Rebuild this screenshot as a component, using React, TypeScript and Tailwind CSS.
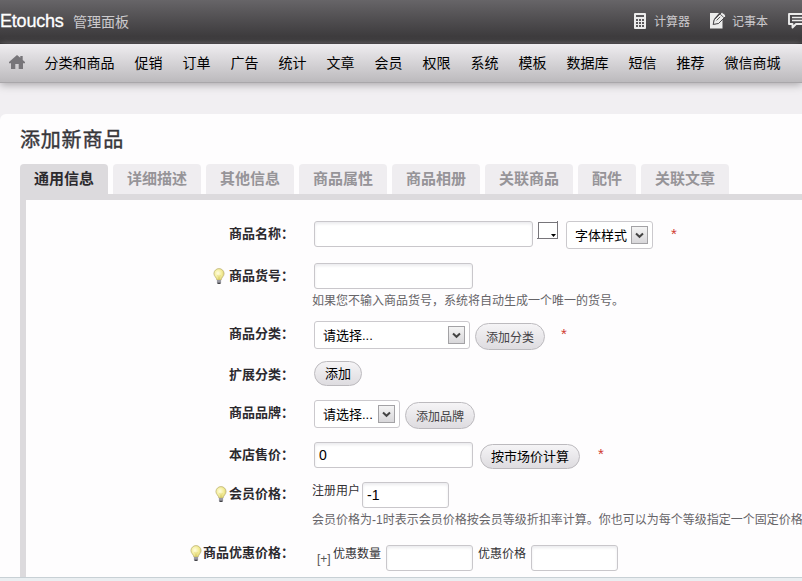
import type { ReactNode } from "react"
import clsx from "clsx"

const menuItems = [
  "分类和商品",
  "促销",
  "订单",
  "广告",
  "统计",
  "文章",
  "会员",
  "权限",
  "系统",
  "模板",
  "数据库",
  "短信",
  "推荐",
  "微信商城",
]

const tabs = ["通用信息", "详细描述", "其他信息", "商品属性", "商品相册", "关联商品", "配件", "关联文章"]

function CalculatorIcon() {
  return (
    <svg width="12" height="16" viewBox="0 0 12 16" className="-mt-0.5 shrink-0">
      <rect width="12" height="16" rx="1" fill="#ececec" />
      <rect x="2" y="2" width="8" height="2" fill="#5a585b" />
      {[6, 9, 12].map((y) =>
        [2, 5, 8].map((x) => <rect key={`${x}-${y}`} x={x} y={y} width="2" height="2" fill="#5a585b" />),
      )}
    </svg>
  )
}

function NoteIcon() {
  return (
    <svg width="17" height="17" viewBox="0 0 17 17" className="-mt-0.5 shrink-0">
      <path d="M0 1h9L4 7l-1.200 5.800L8.600 11.500 12.500 7v9.500H0z" fill="#ececec" />
      <path d="M3.200 12.400l1-4.600 7-7c1.200-1 5 2 4.300 3.700l-7 7z" fill="#ececec" stroke="#4a484b" strokeWidth="1" />
      <path d="M10.200 2.200l3.700 3.400M6.600 8.400l3.600-3.600" stroke="#4a484b" strokeWidth=".9" />
    </svg>
  )
}

function CommentIcon() {
  return (
    <svg width="18" height="16" viewBox="0 0 18 16" className="shrink-0">
      <path d="M1 1h16v10H8l-3.500 3.500V11H1z" fill="#4a484b" stroke="#ececec" strokeWidth="1.900" strokeLinejoin="round" />
      <path d="M4 4.500h10M4 7.500h10" stroke="#ececec" strokeWidth="1.300" />
    </svg>
  )
}

function HomeIcon() {
  return (
    <svg width="16" height="14" viewBox="0 0 16 14" className="-mt-0.5 shrink-0">
      <path d="M8 0 0 7v1.200h2V14h4.300V9h3.400v5H14V8.200h2V7l-2.300-2V1h-2.400v1.800z" fill="#777579" />
    </svg>
  )
}

function BulbIcon() {
  return (
    <svg width="12" height="17" viewBox="0 0 12 17" className="shrink-0">
      <defs>
        <radialGradient id="bulb" cx=".4" cy=".4" r=".65">
          <stop offset="0" stopColor="#fffde0" />
          <stop offset=".6" stopColor="#f3ec96" />
          <stop offset="1" stopColor="#dcd070" />
        </radialGradient>
      </defs>
      <path
        d="M6 .6A5.100 5.100 0 0 0 .9 5.600C.9 8.300 3.500 9.300 3.900 12h4.200c.4-2.700 3-3.700 3-6.400A5.100 5.100 0 0 0 6 .6z"
        fill="url(#bulb)"
        stroke="#b8ae72"
        strokeWidth=".7"
      />
      <path d="M4.800 7l1.200 5 1.200-5" stroke="#d3c55e" strokeWidth=".5" fill="none" />
      <path d="M3.900 12h4.200v2.500L7 16H5l-1.100-1.500z" fill="#9a9aa2" />
      <path d="M4.500 15.300h3" stroke="#3b3b40" strokeWidth="1.200" />
    </svg>
  )
}

function TextField({ className, value = "" }: { className: string; value?: string }) {
  return (
    <input
      type="text"
      defaultValue={value}
      className={clsx(
        "h-[26px] shrink-0 rounded-[3px] border border-[#c9c7cb] bg-white px-1 text-[14px] text-black shadow-[inset_0_2px_3px_#ececef]",
        className,
      )}
    />
  )
}

function SelectBox({ className, label }: { className: string; label: string }) {
  return (
    <button
      type="button"
      className={clsx(
        "flex h-7 shrink-0 items-center justify-between rounded-[3px] border border-[#cbc9cd] bg-white pr-1 pl-2 text-[13px] text-black",
        className,
      )}
    >
      <span className="mt-0.5 whitespace-nowrap">{label}</span>
      <span className="flex h-[18px] w-[17px] items-center justify-center border border-[#a3a2a5] bg-linear-to-b from-[#f4f4f4] to-[#d8d7da]">
        <svg width="9" height="7" viewBox="0 0 9 7">
          <path d="M1 1.500l3.500 3.300L8 1.500" fill="none" stroke="#444" strokeWidth="2" />
        </svg>
      </span>
    </button>
  )
}

function PillButton({ className, children }: { className: string; children: ReactNode }) {
  return (
    <button
      type="button"
      className={clsx(
        "flex shrink-0 items-center justify-center rounded-full border border-[#bcbabe] bg-linear-to-b from-[#f5f4f6] to-[#dedce0] whitespace-nowrap",
        className,
      )}
    >
      {children}
    </button>
  )
}

function ColorPicker() {
  return (
    <span className="ml-1 flex h-[18px] w-[21px] items-end justify-end border-r border-b border-[#77757a]">
      <span className="flex h-4 w-[19px] items-end justify-end border-t border-l border-[#77757a] bg-white pr-px pb-px">
        <svg width="5" height="3" viewBox="0 0 5 3">
          <path d="M0 0h5L2.500 3z" fill="#000" />
        </svg>
      </span>
    </span>
  )
}

function Required({ className }: { className: string }) {
  return <span className={clsx("h-[26px] text-[15px] leading-[26px] text-[#d03a30]", className)}>*</span>
}

type RowProps = {
  label: string
  hint?: boolean
  // space between the bulb and the label
  hintGap?: string
  labelClass: string
  className: string
  children: ReactNode
}

function Row({ label, hint, hintGap = "mr-0.5", labelClass, className, children }: RowProps) {
  return (
    <div className={clsx("flex items-start", className)}>
      <div
        className={clsx(
          "flex w-[268px] shrink-0 items-center justify-end text-[13px] leading-5 font-bold text-[#2c2a2e]",
          labelClass,
        )}
      >
        {hint && (
          <span className={hintGap}>
            <BulbIcon />
          </span>
        )}
        <span className="whitespace-nowrap">{label}：</span>
      </div>
      <div className="ml-[18px] min-w-0 flex-1">{children}</div>
    </div>
  )
}

export default function App() {
  return (
    <div className="flex h-[581px] w-[802px] flex-col overflow-hidden bg-[#f1eff2] font-['Liberation_Sans','Noto_Sans_CJK_SC',sans-serif]">
      <header className="flex h-11 shrink-0 items-center border-b border-[#242224] bg-linear-to-b from-[#676568] to-[#363436]">
        <span className="-mt-0.5 w-[73px] text-[18px] leading-[42px] tracking-[-0.2px] text-white [-webkit-text-stroke:0.3px]">
          Etouchs
        </span>
        <span className="mt-0.5 text-[14px] text-[#cccacd]">管理面板</span>
        <div className="ml-auto flex shrink-0 items-center text-[12px] text-[#cccacd]">
          <CalculatorIcon />
          <span className="mr-5 ml-2">计算器</span>
          <NoteIcon />
          <span className="mr-5 ml-[5px]">记事本</span>
          <div className="-mt-0.5 w-[14px] overflow-hidden">
            <CommentIcon />
          </div>
        </div>
      </header>

      <nav className="flex h-[39px] shrink-0 items-center border-b border-[#a9a7aa] bg-linear-to-b from-[#efedf0] to-[#bcbabd] pl-[9px] shadow-[0_2px_8px_#a9a7aa]">
        <HomeIcon />
        <ul className="ml-[19.5px] flex gap-5 text-[14px] whitespace-nowrap text-black">
          {menuItems.map((item) => (
            <li key={item}>{item}</li>
          ))}
        </ul>
      </nav>

      <main className="mt-[31px] flex min-h-0 flex-1 flex-col rounded-tl-md bg-[#fefdfe] pl-5">
        <h1 className="mt-[11px] h-[39px] text-[20px] leading-[30px] tracking-[0.800px] text-[#38363a] [-webkit-text-stroke:0.4px]">
          添加新商品
        </h1>

        <div className="flex gap-[5px]">
          {tabs.map((tab, i) => (
            <button
              key={tab}
              type="button"
              className={clsx(
                "h-[30px] rounded-t px-3.5 text-[15px] leading-[30px] font-bold whitespace-nowrap",
                i === 0 ? "bg-[#dcdadd] text-[#2c2a2e]" : "bg-[#efedf0] text-[#969498]",
              )}
            >
              {tab}
            </button>
          ))}
        </div>

        <form className="min-h-0 flex-1 overflow-hidden border-t-[6px] border-l-[6px] border-[#dcdadd] pt-[21px]">
          <Row label="商品名称" labelClass="mt-[3px]" className="h-[42px]">
            <div className="flex pl-0.5">
              <TextField className="w-[219px]" />
              <ColorPicker />
              <SelectBox className="ml-2 w-[87px]" label="字体样式" />
              <Required className="ml-[18px]" />
            </div>
          </Row>

          <Row label="商品货号" hint hintGap="mr-1" labelClass="mt-[3px]" className="h-[58px]">
            <div className="pl-0.5">
              <TextField className="block w-[159px]" />
            </div>
            <p className="mt-[3px] text-[12px] leading-[18px] text-[#666468]">
              如果您不输入商品货号，系统将自动生成一个唯一的货号。
            </p>
          </Row>

          <Row label="商品分类" labelClass="mt-[3px]" className="h-10">
            <div className="flex pl-0.5">
              <SelectBox className="w-[156px]" label="请选择..." />
              <PillButton className="mt-0.5 ml-[5px] h-[27px] w-[70px] pt-0.5 text-[12px] text-[#444246]">
                添加分类
              </PillButton>
              <Required className="ml-4" />
            </div>
          </Row>

          <Row label="扩展分类" labelClass="mt-1" className="h-[39px]">
            <div className="flex pl-0.5">
              <PillButton className="h-[25px] w-12 text-[13px] text-black">添加</PillButton>
            </div>
          </Row>

          <Row label="商品品牌" labelClass="mt-[3px]" className="h-[42px]">
            <div className="flex pl-0.5">
              <SelectBox className="w-[86px]" label="请选择..." />
              <PillButton className="mt-0.5 ml-[5px] h-[27px] w-[70px] pt-0.5 text-[12px] text-[#444246]">
                添加品牌
              </PillButton>
            </div>
          </Row>

          <Row label="本店售价" labelClass="mt-[3px]" className="h-10">
            <div className="flex pl-0.5">
              <TextField className="w-[159px]" value="0" />
              <PillButton className="mt-0.5 ml-[7px] h-[25px] w-[100px] text-[13px] text-black">按市场价计算</PillButton>
              <Required className="-mt-px ml-[18px]" />
            </div>
          </Row>

          <Row label="会员价格" hint labelClass="mt-0.5" className="h-[63px]">
            <div className="flex text-[12px] leading-[18px] text-[#333135]">
              <span>注册用户</span>
              <TextField className="ml-0.5 w-[87px]" value="-1" />
            </div>
            <p className="mt-[3px] w-[600px] text-[12px] leading-[18px] whitespace-nowrap text-[#666468]">
              会员价格为-1时表示会员价格按会员等级折扣率计算。你也可以为每个等级指定一个固定价格
            </p>
          </Row>

          <Row label="商品优惠价格" hint hintGap="mr-px" labelClass="-mt-0.5" className="h-8">
            <div className="flex pl-[5px] text-[12px] leading-[18px] text-[#333135]">
              <span className="mt-[5px] w-4 text-[#555]">[+]</span>
              <span>优惠数量</span>
              <TextField className="ml-[5px] w-[87px]" />
              <span className="ml-[5px]">优惠价格</span>
              <TextField className="ml-[5px] w-[87px]" />
            </div>
          </Row>
        </form>
      </main>
      <footer className="h-1 shrink-0 border-t border-[#c8d0d5] bg-[#eaeef1]" />
    </div>
  )
}
